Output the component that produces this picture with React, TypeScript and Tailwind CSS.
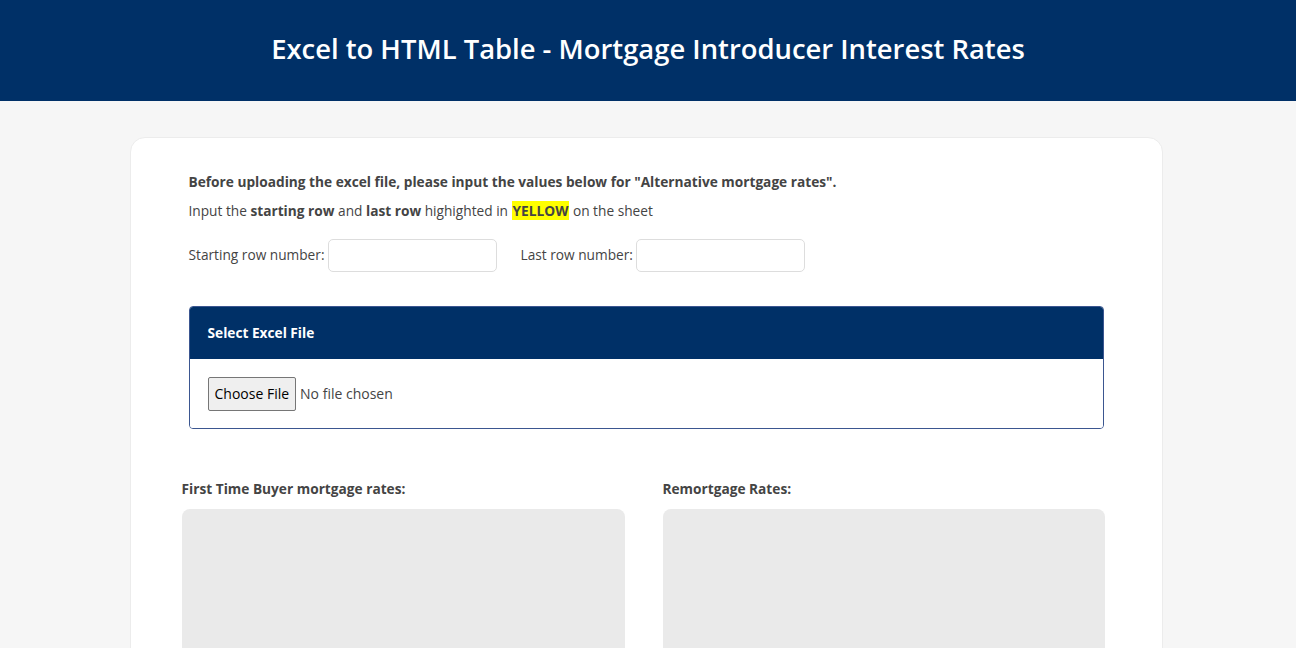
export default function App() {
  return (
    <div className="min-h-screen bg-[#f6f6f6] font-['Open_Sans',sans-serif] text-[#444]">
      {/* Header */}
      <header className="h-[101px] bg-[#003067] flex items-center justify-center">
        <h1 className="text-[27.4px] font-semibold text-white pb-[3px]">
          Excel to HTML Table - Mortgage Introducer Interest Rates
        </h1>
      </header>

      <main className="pt-[36px] flex justify-center">
        <div className="w-[1033px] ml-[-4px] bg-white rounded-[15px] border border-[#ececec] pt-[34px] pb-10 px-[51px] h-[560px]">
          <div className="px-[7px]">
            <p className="text-[13.7px] font-bold text-[#444] leading-[20px]">
              Before uploading the excel file, please input the values below for "Alternative mortgage rates".
            </p>
            <p className="text-[13.7px] leading-[20px] mt-[9px]">
              Input the <b>starting row</b> and <b>last row</b> highighted in{' '}
              <b className="bg-[#ffff00] px-[1px]">YELLOW</b> on the sheet
            </p>

            <div className="flex items-center mt-[18px] text-[13.7px]">
              <label className="flex items-center">
                Starting row number:
                <input type="text" className="ml-[3px] w-[169px] h-[33px] border border-[#ddd] rounded-[5px] bg-white" />
              </label>
              <label className="flex items-center ml-[24px]">
                Last row number:
                <input type="text" className="ml-[3px] w-[169px] h-[33px] border border-[#ddd] rounded-[5px] bg-white" />
              </label>
            </div>

            {/* File panel */}
            <div className="mt-[34px] border border-[#3b5690] rounded-[4px] overflow-hidden">
              <div className="h-[52px] bg-[#003067] flex items-center px-[18px]">
                <span className="text-white text-[13.7px] font-bold">Select Excel File</span>
              </div>
              <div className="h-[69px] flex items-center px-[18px] bg-white">
                <button className="h-[34px] px-[6px] bg-[#efefef] border border-[#767676] rounded-[2px] text-[14px] text-black">
                  Choose File
                </button>
                <span className="ml-[4px] text-[14px]">No file chosen</span>
              </div>
            </div>
          </div>

          {/* Result columns */}
          <div className="grid grid-cols-[443px_442px] gap-[38px] mt-[50px]">
            <div>
              <h3 className="text-[13.7px] font-bold leading-[20px]">First Time Buyer mortgage rates:</h3>
              <div className="mt-[10px] h-[200px] bg-[#eaeaea] rounded-[8px]" />
            </div>
            <div>
              <h3 className="text-[13.7px] font-bold leading-[20px]">Remortgage Rates:</h3>
              <div className="mt-[10px] h-[200px] bg-[#eaeaea] rounded-[8px]" />
            </div>
          </div>
        </div>
      </main>
    </div>
  );
}
